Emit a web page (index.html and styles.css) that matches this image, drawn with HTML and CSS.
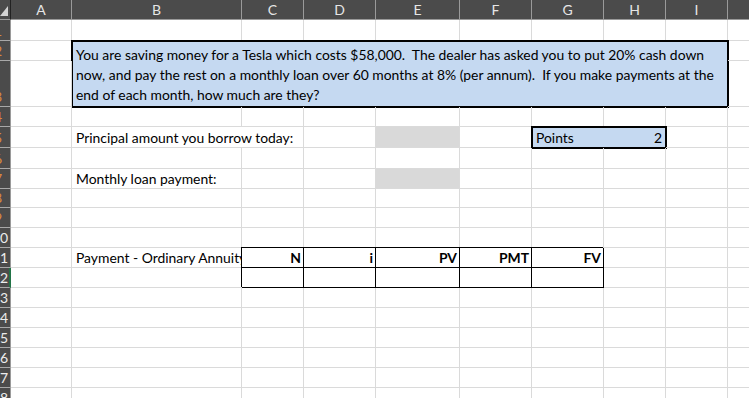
FILE: index.html
```html
<!DOCTYPE html>
<html lang="en">
<head>
  <meta charset="UTF-8" />
  <title>Tesla loan worksheet</title>
  <link rel="stylesheet" href="styles.css">
</head>
<body>
  <div class="sheet">
    <!-- column headers -->
    <div class="ch corner"><span class="tri"></span></div>
    <div class="ch">A</div><div class="ch">B</div><div class="ch">C</div><div class="ch">D</div><div class="ch">E</div>
    <div class="ch">F</div><div class="ch">G</div><div class="ch">H</div><div class="ch">I</div><div class="ch"></div>

    <!-- row 1 -->
    <div class="rh cut"><span>1</span></div>
    <div class="c"></div><div class="c"></div><div class="c"></div><div class="c"></div><div class="c"></div><div class="c"></div><div class="c"></div><div class="c"></div><div class="c"></div><div class="c"></div>

    <!-- rows 2-3: question box -->
    <div class="rh cut"><span>2</span></div>
    <div class="c"></div>
    <div class="c question">You are saving money for a Tesla which costs $58,000.&nbsp; The dealer has asked you to put 20% cash down<br>now, and pay the rest on a monthly loan over 60 months at 8% (per annum).&nbsp; If you make payments at the<br>end of each month, how much are they?</div>
    <div class="c"></div>
    <div class="rh cut"><span>3</span></div>
    <div class="c"></div>
    <div class="c"></div>

    <!-- row 4 -->
    <div class="rh cut"><span>4</span></div>
    <div class="c"></div><div class="c"></div><div class="c"></div><div class="c"></div><div class="c"></div><div class="c"></div><div class="c"></div><div class="c"></div><div class="c"></div><div class="c"></div>

    <!-- row 5 -->
    <div class="rh cut"><span>5</span></div>
    <div class="c"></div>
    <div class="c txt span2">Principal amount you borrow today:</div>
    <div class="c"></div>
    <div class="c input"></div>
    <div class="c"></div>
    <div class="c txt span2 points"><span>Points</span><span>2</span></div>
    <div class="c"></div><div class="c"></div>

    <!-- row 6 -->
    <div class="rh cut"><span>6</span></div>
    <div class="c"></div><div class="c"></div><div class="c"></div><div class="c"></div><div class="c"></div><div class="c"></div><div class="c"></div><div class="c"></div><div class="c"></div><div class="c"></div>

    <!-- row 7 -->
    <div class="rh cut"><span>7</span></div>
    <div class="c"></div>
    <div class="c txt">Monthly loan payment:</div>
    <div class="c"></div><div class="c"></div>
    <div class="c input"></div>
    <div class="c"></div><div class="c"></div><div class="c"></div><div class="c"></div><div class="c"></div>

    <!-- rows 8-10 -->
    <div class="rh cut"><span>8</span></div>
    <div class="c"></div><div class="c"></div><div class="c"></div><div class="c"></div><div class="c"></div><div class="c"></div><div class="c"></div><div class="c"></div><div class="c"></div><div class="c"></div>
    <div class="rh cut"><span>9</span></div>
    <div class="c"></div><div class="c"></div><div class="c"></div><div class="c"></div><div class="c"></div><div class="c"></div><div class="c"></div><div class="c"></div><div class="c"></div><div class="c"></div>
    <div class="rh"><span>10</span></div>
    <div class="c"></div><div class="c"></div><div class="c"></div><div class="c"></div><div class="c"></div><div class="c"></div><div class="c"></div><div class="c"></div><div class="c"></div><div class="c"></div>

    <!-- row 11: annuity table header -->
    <div class="rh"><span>11</span></div>
    <div class="c"></div>
    <div class="c txt">Payment - Ordinary Annuity</div>
    <div class="c box head">N</div>
    <div class="c box head">i</div>
    <div class="c box head">PV</div>
    <div class="c box head">PMT</div>
    <div class="c box head">FV</div>
    <div class="c"></div><div class="c"></div><div class="c"></div>

    <!-- row 12 -->
    <div class="rh active"><span>12</span></div>
    <div class="c"></div><div class="c"></div>
    <div class="c box"></div><div class="c box"></div><div class="c box"></div><div class="c box"></div><div class="c box"></div>
    <div class="c"></div><div class="c"></div><div class="c"></div>

    <!-- rows 13-18 -->
    <div class="rh"><span>13</span></div>
    <div class="c"></div><div class="c"></div><div class="c"></div><div class="c"></div><div class="c"></div><div class="c"></div><div class="c"></div><div class="c"></div><div class="c"></div><div class="c"></div>
    <div class="rh"><span>14</span></div>
    <div class="c"></div><div class="c"></div><div class="c"></div><div class="c"></div><div class="c"></div><div class="c"></div><div class="c"></div><div class="c"></div><div class="c"></div><div class="c"></div>
    <div class="rh"><span>15</span></div>
    <div class="c"></div><div class="c"></div><div class="c"></div><div class="c"></div><div class="c"></div><div class="c"></div><div class="c"></div><div class="c"></div><div class="c"></div><div class="c"></div>
    <div class="rh"><span>16</span></div>
    <div class="c"></div><div class="c"></div><div class="c"></div><div class="c"></div><div class="c"></div><div class="c"></div><div class="c"></div><div class="c"></div><div class="c"></div><div class="c"></div>
    <div class="rh"><span>17</span></div>
    <div class="c"></div><div class="c"></div><div class="c"></div><div class="c"></div><div class="c"></div><div class="c"></div><div class="c"></div><div class="c"></div><div class="c"></div><div class="c"></div>
    <div class="rh"><span>18</span></div>
    <div class="c"></div><div class="c"></div><div class="c"></div><div class="c"></div><div class="c"></div><div class="c"></div><div class="c"></div><div class="c"></div><div class="c"></div><div class="c"></div>
  </div>
</body>
</html>
```

FILE: styles.css
```css
body {
  margin: 0;
  overflow: hidden;
  background: #fff;
  font-family: "Lato", "Open Sans", sans-serif;
}
.sheet {
  display: grid;
  grid-template-columns: 11px 61px 170px 62px 72px 84px 72px 72px 62px 62px 62px;
  grid-template-rows: 20px 21px 20px 46px 20px 21px 21px 20px 19px 20px repeat(9, 20px);
  height: 100vh;
  overflow: hidden;
  font-size: 13.9px;
  color: #000;
}
.sheet > div {
  box-sizing: border-box;
  min-width: 0;
}
.ch {
  background: #4b4b4b;
  color: #e6e6e6;
  font-size: 14px;
  display: flex;
  align-items: center;
  justify-content: center;
  border-right: 1px solid #9a9a9a;
  border-bottom: 1px solid #9a9a9a;
}
.corner {
  border-right-color: #222;
  align-items: flex-end;
  justify-content: flex-end;
  padding: 0 2px 3px 0;
}
.tri {
  width: 0;
  height: 0;
  border-left: 8px solid transparent;
  border-bottom: 10px solid #d4d4d4;
}
.rh {
  background: #4b4b4b;
  color: #ececec;
  font-size: 14px;
  display: flex;
  align-items: flex-end;
  overflow: hidden;
  border-right: 1px solid #9a9a9a;
  border-bottom: 1px solid #a8a8a8;
}
.rh span {
  flex-shrink: 0;
  width: 22px;
  margin-left: -11px;
  text-align: center;
  line-height: 19px;
}
.rh.cut span {
  margin-left: -13px;
  color: #d98a3a;
}
.rh.active {
  border-right: 2px solid #217346;
}
.c {
  border-right: 1px solid #dadada;
  border-bottom: 1px solid #dadada;
}
.txt {
  display: flex;
  align-items: flex-end;
  padding: 0 0 1px 4px;
  white-space: nowrap;
  overflow: hidden;
}
.span2 {
  grid-column: span 2;
}
.question {
  grid-column: span 8;
  grid-row: span 2;
  background: #c5d9f1;
  outline: 2px solid #000;
  outline-offset: -1px;
  padding: 4px 0 0 4px;
  line-height: 20px;
  white-space: nowrap;
  overflow: hidden;
}
.points {
  background: #c5d9f1;
  outline: 2px solid #000;
  outline-offset: -1px;
  justify-content: space-between;
  padding-right: 3px;
}
.input {
  background: #d9d9d9;
}
.box {
  border-color: #000;
  box-shadow: -1px -1px 0 #000;
}
.head {
  display: flex;
  align-items: flex-end;
  justify-content: flex-end;
  padding: 0 2px 1px 0;
  font-weight: bold;
}
```
